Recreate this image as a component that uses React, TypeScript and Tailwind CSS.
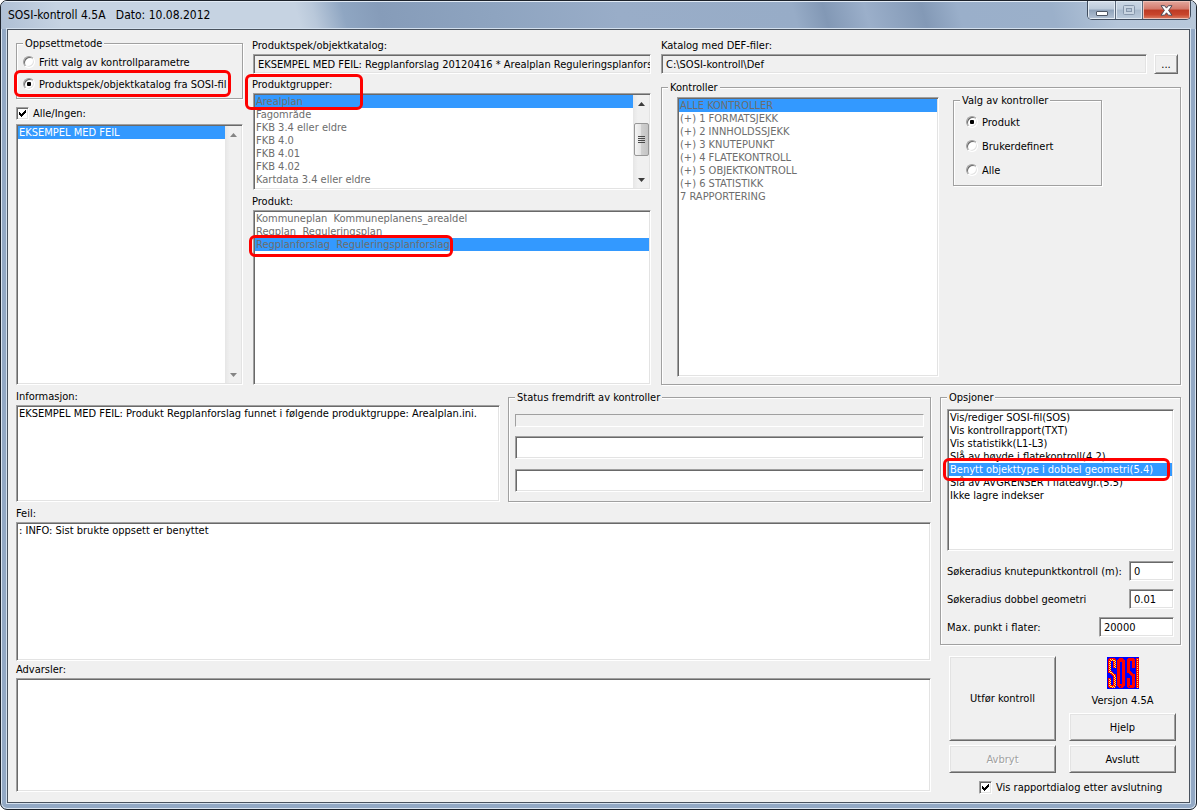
import { useId, type ReactNode } from "react";

const SUNKEN =
  "border border-t-[#a0a0a0] border-l-[#a0a0a0] border-r-white border-b-white shadow-[inset_1px_1px_#696969,inset_-1px_-1px_#e3e3e3]";
const RAISED =
  "border border-t-white border-l-white border-r-[#696969] border-b-[#696969] bg-[#f0f0f0] shadow-[inset_1px_1px_#e3e3e3,inset_-1px_-1px_#a0a0a0]";

function Highlight({ className }: { className: string }) {
  return (
    <span
      aria-hidden="true"
      className={`pointer-events-none absolute z-10 rounded-[6px] border-3 border-[#fe0000] ${className}`}
    />
  );
}

function GroupBox({ title, className = "", children }: { title: string; className?: string; children: ReactNode }) {
  return (
    <fieldset
      className={`min-w-0 border border-[#a0a0a0] px-[6px] shadow-[1px_1px_#fff,inset_1px_1px_#fff] ${className}`}
    >
      <legend className="bg-[#f0f0f0] px-[2px]">{title}</legend>
      {children}
    </fieldset>
  );
}

function Radio({ name, label, checked, children }: { name: string; label: string; checked?: boolean; children?: ReactNode }) {
  return (
    <label className="relative flex h-[14px] items-center gap-1 whitespace-nowrap">
      <input
        type="radio"
        name={name}
        defaultChecked={checked}
        className="size-3 shrink-0 appearance-none rounded-full border border-t-[#a0a0a0] border-r-white border-b-white border-l-[#a0a0a0] bg-white shadow-[inset_1px_1px_#696969,inset_-1px_-1px_#e3e3e3] checked:bg-[radial-gradient(circle,#000_2px,#fff_2.5px)]"
      />
      {label}
      {children}
    </label>
  );
}

function Check({ label }: { label: string }) {
  return (
    <label className="flex h-[14px] items-center gap-1 whitespace-nowrap">
      <span className="relative size-[13px] shrink-0">
        <input type="checkbox" defaultChecked className={`peer block size-[13px] appearance-none bg-white ${SUNKEN}`} />
        <svg
          viewBox="0 0 13 13"
          className="pointer-events-none absolute inset-0 hidden size-[13px] peer-checked:block"
          shapeRendering="crispEdges"
        >
          <path d="M3 5h1v1h1v1h1v-1h1v-1h1v-1h1v-1h1v3h-1v1h-1v1h-1v1h-1v1h-1v-1h-1v-1h-1z" fill="#000" />
        </svg>
      </span>
      {label}
    </label>
  );
}

function Arrow({ up, dim }: { up?: boolean; dim?: boolean }) {
  return (
    <svg viewBox="0 0 7 4" className="h-1 w-[7px]">
      <path d={up ? "M0 4 3.5 0 7 4z" : "M0 0h7L3.5 4z"} fill={dim ? "#848484" : "#3c3c3c"} />
    </svg>
  );
}

function ScrollBar({ disabled }: { disabled?: boolean }) {
  return (
    <div
      aria-hidden="true"
      className="flex w-4 shrink-0 flex-col items-center bg-[linear-gradient(90deg,#e6e6e6,#f0f0f0_30%,#f0f0f0)]"
    >
      <span className="flex h-[17px] items-center">
        <Arrow up dim={disabled} />
      </span>
      <span className="flex flex-1 flex-col">
        {!disabled && (
          <span className="mt-[11px] flex h-[33px] w-[15px] flex-col items-center justify-center gap-px rounded-[2px] border border-[#979797] bg-[linear-gradient(90deg,#f5f5f5,#e4e4e4_45%,#cfcfcf_50%,#c4c4c4)]">
            <i className="h-px w-[7px] bg-[#4a4a4a]" />
            <i className="h-px w-[7px] bg-[#4a4a4a]" />
            <i className="h-px w-[7px] bg-[#4a4a4a]" />
            <i className="h-px w-[7px] bg-[#4a4a4a]" />
          </span>
        )}
      </span>
      <span className="flex h-[17px] items-center">
        <Arrow dim={disabled} />
      </span>
    </div>
  );
}

type ListProps = {
  label: string;
  items: string[];
  selected: number;
  disabled?: boolean;
  scroll?: "active" | "disabled";
  mark?: string;
  className?: string;
};

function ListBox({ label, items, selected, disabled, scroll, mark, className = "" }: ListProps) {
  return (
    <div className={`flex bg-white p-px ${SUNKEN} ${className}`}>
      <ul role="listbox" aria-label={label} aria-disabled={disabled} className="min-w-0 flex-1">
        {items.map((item, i) => {
          const on = i === selected;
          const color = disabled ? "text-[#6d6d6d]" : on ? "text-white" : "text-black";
          return (
            <li
              key={item}
              role="option"
              aria-selected={on}
              className={`relative h-[13px] px-px whitespace-pre ${color} ${on ? "bg-[#3399ff]" : ""}`}
            >
              {item}
              {on && mark && <Highlight className={mark} />}
            </li>
          );
        })}
      </ul>
      {scroll && <ScrollBar disabled={scroll === "disabled"} />}
    </div>
  );
}

function Memo({ label, value, className = "", boxClass = "" }: { label: string; value: string; className?: string; boxClass?: string }) {
  const id = useId();
  return (
    <div className={`flex flex-col ${className}`}>
      <label htmlFor={id}>{label}</label>
      <textarea
        id={id}
        readOnly
        defaultValue={value}
        className={`mt-[2px] block w-full resize-none overflow-hidden bg-white px-[2px] py-px outline-none ${SUNKEN} ${boxClass}`}
      />
    </div>
  );
}

function NumberRow({ label, value, width }: { label: string; value: string; width: string }) {
  const id = useId();
  return (
    <div className="flex h-5 items-center justify-between">
      <label htmlFor={id} className="whitespace-nowrap">
        {label}
      </label>
      <input id={id} defaultValue={value} className={`h-5 bg-white px-1 outline-none ${SUNKEN} ${width}`} />
    </div>
  );
}

function SosiLogo() {
  const s = "M7.5 11V3.5L6.5 2.5H3.5L2.5 3.5V14.5L7.5 18.5V28.5L6.5 29.5H3.5L2.5 28.5V21";
  const dots =
    "M7 9h1v1h-1zM7 7h1v1h-1zM7 5h1v1h-1zM7 3h1v1h-1zM5 2h1v1h-1zM3 2h1v1h-1zM2 4h1v1h-1zM2 6h1v1h-1zM2 8h1v1h-1zM2 10h1v1h-1zM2 12h1v1h-1zM2 14h1v1h-1zM4 15h1v1h-1zM6 17h1v1h-1zM7 19h1v1h-1zM7 21h1v1h-1zM7 23h1v1h-1zM7 25h1v1h-1zM7 27h1v1h-1zM6 29h1v1h-1zM4 29h1v1h-1zM2 28h1v1h-1zM2 26h1v1h-1zM2 24h1v1h-1zM2 22h1v1h-1z";
  return (
    <svg viewBox="0 0 32 32" className="size-8" role="img" aria-label="SOSI" shapeRendering="crispEdges">
      <rect width="32" height="32" fill="#0000fe" />
      <g fill="none" stroke="#fe0000" strokeWidth="3" strokeLinejoin="bevel">
        <path d={s} />
        <path d="M11.5 4.5 13.5 2.5H14.5L16.5 4.5V27.5L14.5 29.5H13.5L11.5 27.5Z" />
        <path d={s} transform="translate(19 0)" />
        <path d="M30.5 1V31" />
      </g>
      <path d={dots} fill="#ffff40" />
      <path d={dots} fill="#ffff40" transform="translate(1 1)" />
      <path d="M30.5 2V31" stroke="#ffff40" strokeDasharray="1 1" />
    </svg>
  );
}

const BTN = "flex items-center justify-center";

export default function App() {
  return (
    <div className="flex min-h-screen flex-col overflow-hidden rounded-[7px] border border-[#1c222b] bg-[#93a9c5] font-['DejaVu_Sans_Condensed','DejaVu_Sans',sans-serif] text-[11px] leading-[13px] text-black shadow-[inset_0_0_0_1px_#dbe6f2]">
      <header className="flex h-7 items-start justify-between bg-[linear-gradient(75deg,#aebfd4_0,#c6d3e2_60px,#c6d3e2_290px,#b9c8da_306px,#8fa6c2_335px,#869cb9_370px,#8ea4c0_480px,#99adc8_600px,#97acc7_770px,#8298b5_800px,#9bafca_840px,#8399b6_895px,#9aafca_930px,#9bb0ca_1020px,#b4c5d9_1080px,#b8c8da_100%)] shadow-[inset_0_1px_#e2ebf5]">
        <h1 className="pt-[6px] pl-[7px] text-[12px] leading-4 font-normal whitespace-pre">
          {"SOSI-kontroll 4.5A   Dato: 10.08.2012"}
        </h1>
        <div className="mr-[5px] flex h-[19px] overflow-hidden rounded-b-[5px] border border-t-0 border-[#3f4c5e]">
          <button
            type="button"
            aria-label="Minimer"
            className={`${BTN} w-7 border-r border-[#5a687b] bg-[linear-gradient(#d3dde9,#bccada_45%,#8fa2b9_50%,#b4c3d5)] shadow-[inset_0_0_0_1px_#e4ecf4]`}
          >
            <span className="mt-[6px] h-[5px] w-3 rounded-[1px] border border-[#4d5664] bg-white" />
          </button>
          <button
            type="button"
            disabled
            aria-label="Maksimer"
            className={`${BTN} w-[27px] border-r border-[#5a687b] bg-[linear-gradient(#cbd7e4,#bfcddd_45%,#a9bacd_50%,#bccbdc)] shadow-[inset_0_0_0_1px_#dfe8f1]`}
          >
            <svg viewBox="0 0 12 10" className="h-[10px] w-3">
              <rect x=".5" y=".5" width="11" height="9" rx="1" fill="#c9d5e2" stroke="#8797ab" />
              <rect x="3.5" y="3.5" width="5" height="3" fill="#b4c3d4" stroke="#8797ab" />
            </svg>
          </button>
          <button
            type="button"
            aria-label="Lukk"
            className={`${BTN} w-[47px] bg-[linear-gradient(#e3a89e,#d3796b_45%,#bd3a24_50%,#c8452c_75%,#dd8066)] shadow-[inset_0_0_0_1px_#eec0b6]`}
          >
            <svg viewBox="0 0 13 11" className="h-[11px] w-[13px]">
              <path
                d="M1 .7h3.6l1.9 2.4L8.4.7H12L8.6 5.4 12 10.2H8.4L6.5 7.8l-1.9 2.4H1l3.4-4.8z"
                fill="#fff"
                stroke="#4d4a57"
                strokeWidth="1"
              />
            </svg>
          </button>
        </div>
      </header>

      <main className="mx-[6px] mb-[6px] flex flex-1 flex-col border border-[#49525e] bg-[#f0f0f0] px-2 shadow-[0_0_0_1px_#d3e0ee]">
        <section className="flex">
          <div className="flex w-[227px] shrink-0 flex-col pt-[7px]">
            <GroupBox title="Oppsettmetode">
              <div className="flex flex-col gap-2 pt-[5px] pb-[7px]">
                <Radio name="oppsett" label="Fritt valg av kontrollparametre" />
                <Radio name="oppsett" label="Produktspek/objektkatalog fra SOSI-fil" checked>
                  <Highlight className="-top-[7px] -left-[9px] h-[27px] w-[217px]" />
                </Radio>
              </div>
            </GroupBox>
            <div className="mt-[7px]">
              <Check label="Alle/Ingen:" />
            </div>
            <ListBox
              label="Alle/Ingen"
              items={["EKSEMPEL MED FEIL"]}
              selected={0}
              scroll="disabled"
              className="mt-1 flex-1"
            />
          </div>

          <div className="ml-[9px] flex w-[399px] shrink-0 flex-col pt-[9px]">
            <label htmlFor="spek">Produktspek/objektkatalog:</label>
            <input
              id="spek"
              readOnly
              defaultValue="EKSEMPEL MED FEIL: Regplanforslag 20120416 * Arealplan Reguleringsplanforslag"
              className={`mt-[2px] ml-px h-5 pl-1 outline-none ${SUNKEN}`}
            />
            <p className="relative mt-1">
              Produktgrupper:
              <Highlight className="-top-1 -left-[7px] h-9 w-[118px]" />
            </p>
            <ListBox
              label="Produktgrupper"
              items={["Arealplan", "Fagområde", "FKB 3.4 eller eldre", "FKB 4.0", "FKB 4.01", "FKB 4.02", "Kartdata 3.4 eller eldre"]}
              selected={0}
              disabled
              scroll="active"
              className="mt-[2px] ml-px h-[97px]"
            />
            <p className="mt-[5px]">Produkt:</p>
            <ListBox
              label="Produkt"
              items={["Kommuneplan  Kommuneplanens_arealdel", "Regplan  Reguleringsplan", "Regplanforslag  Reguleringsplanforslag"]}
              selected={2}
              disabled
              mark="-top-[3px] -left-[6px] h-[22px] w-[204px]"
              className="mt-[2px] ml-px flex-1"
            />
          </div>

          <div className="ml-[10px] flex min-w-0 flex-1 flex-col pt-[9px]">
            <label htmlFor="def">Katalog med DEF-filer:</label>
            <div className="mt-[2px] mr-[3px] flex gap-[7px]">
              <input
                id="def"
                readOnly
                defaultValue="C:\SOSI-kontroll\Def"
                className={`h-5 min-w-0 flex-1 px-1 outline-none ${SUNKEN}`}
              />
              <button type="button" aria-label="Velg katalog" className={`h-5 w-6 ${RAISED}`}>
                ...
              </button>
            </div>
            <GroupBox title="Kontroller" className="mt-[7px]">
              <div className="flex items-start gap-[14px] pb-[7px] pl-[9px]">
                <ListBox
                  label="Kontroller"
                  items={[
                    "ALLE KONTROLLER",
                    "(+) 1 FORMATSJEKK",
                    "(+) 2 INNHOLDSSJEKK",
                    "(+) 3 KNUTEPUNKT",
                    "(+) 4 FLATEKONTROLL",
                    "(+) 5 OBJEKTKONTROLL",
                    "(+) 6 STATISTIKK",
                    "7 RAPPORTERING",
                  ]}
                  selected={0}
                  disabled
                  className="mt-[3px] h-[280px] w-[262px]"
                />
                <GroupBox title="Valg av kontroller" className="w-[149px]">
                  <div className="flex flex-col gap-[10px] pt-2 pb-2 pl-[6px]">
                    <Radio name="valg" label="Produkt" checked />
                    <Radio name="valg" label="Brukerdefinert" />
                    <Radio name="valg" label="Alle" />
                  </div>
                </GroupBox>
              </div>
            </GroupBox>
          </div>
        </section>

        <section className="flex flex-1 gap-[9px]">
          <div className="flex min-w-0 flex-1 flex-col pb-[10px]">
            <div className="flex gap-2">
              <Memo
                label="Informasjon:"
                value="EKSEMPEL MED FEIL: Produkt Regplanforslag funnet i følgende produktgruppe: Arealplan.ini."
                className="w-[484px] shrink-0 pt-[5px]"
                boxClass="h-[97px]"
              />
              <GroupBox title="Status fremdrift av kontroller" className="mt-[6px] flex-1">
                <div className="pt-[10px] pb-[9px]">
                  <div className="h-[13px] border border-t-[#a0a0a0] border-r-white border-b-white border-l-[#a0a0a0]" />
                  <input readOnly aria-label="Kontroll" className={`mt-[9px] block h-[23px] w-full bg-white ${SUNKEN}`} />
                  <input readOnly aria-label="Delkontroll" className={`mt-[10px] block h-[23px] w-full bg-white ${SUNKEN}`} />
                </div>
              </GroupBox>
            </div>
            <Memo
              label="Feil:"
              value=": INFO: Sist brukte oppsett er benyttet"
              className="grow-[6] basis-[159px] pt-[5px]"
              boxClass="flex-1"
            />
            <Memo label="Advarsler:" value="" className="grow-[5] basis-[131px] pt-[2px]" boxClass="flex-1" />
          </div>

          <div className="w-[241px] shrink-0 pt-[6px]">
            <GroupBox title="Opsjoner">
              <ListBox
                label="Opsjoner"
                items={[
                  "Vis/rediger SOSI-fil(SOS)",
                  "Vis kontrollrapport(TXT)",
                  "Vis statistikk(L1-L3)",
                  "Slå av høyde i flatekontroll(4.2)",
                  "Benytt objekttype i dobbel geometri(5.4)",
                  "Slå av AVGRENSER i flateavgr.(5.5)",
                  "Ikke lagre indekser",
                ]}
                selected={4}
                mark="-top-[5px] -left-[6px] h-[23px] w-[227px]"
                className="mt-[5px] h-[142px]"
              />
              <div className="flex flex-col gap-2 pt-[10px] pb-[7px]">
                <NumberRow label="Søkeradius knutepunktkontroll (m):" value="0" width="w-[45px]" />
                <NumberRow label="Søkeradius dobbel geometri" value="0.01" width="w-[45px]" />
                <NumberRow label="Max. punkt i flater:" value="20000" width="w-[75px]" />
              </div>
            </GroupBox>
            <div className="mt-[11px] mr-[5px] ml-[9px] grid grid-cols-2 gap-x-[13px]">
              <div className="flex flex-col gap-1">
                <button type="button" className={`h-[85px] ${RAISED}`}>
                  Utfør kontroll
                </button>
                <button type="button" disabled className={`h-7 text-[#a0a0a0] [text-shadow:1px_1px_#fff] ${RAISED}`}>
                  Avbryt
                </button>
              </div>
              <div className="flex flex-col">
                <div className="flex h-[57px] flex-col items-center gap-[5px] pt-px">
                  <SosiLogo />
                  <span>Versjon 4.5A</span>
                </div>
                <button type="button" className={`h-7 ${RAISED}`}>
                  Hjelp
                </button>
                <button type="button" className={`mt-1 h-7 ${RAISED}`}>
                  Avslutt
                </button>
              </div>
            </div>
            <div className="mt-[7px] ml-[39px]">
              <Check label="Vis rapportdialog etter avslutning" />
            </div>
          </div>
        </section>
      </main>
    </div>
  );
}
